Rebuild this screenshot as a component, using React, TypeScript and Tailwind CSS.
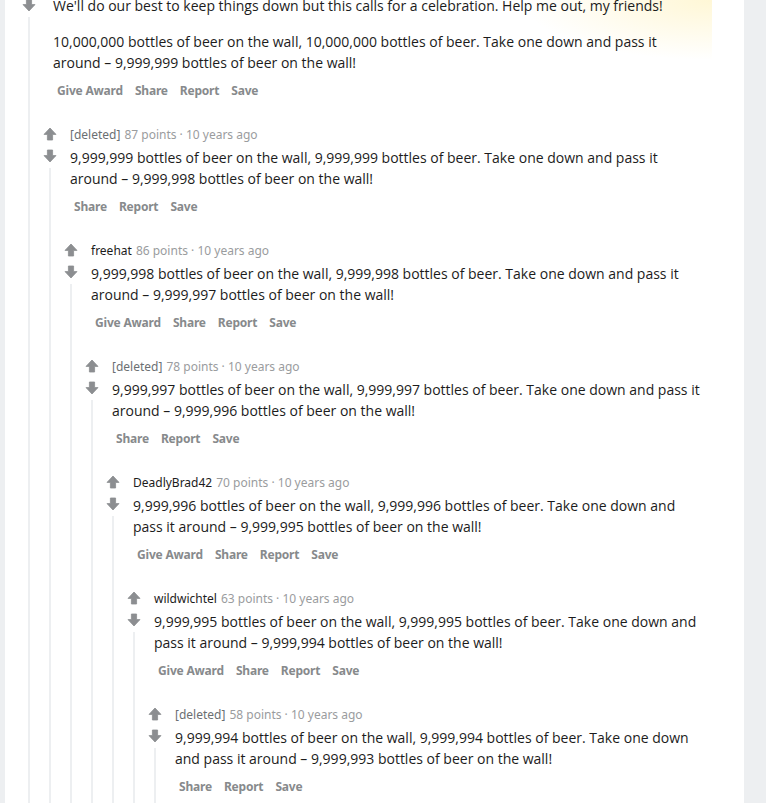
type Comment = {
  depth: number;
  author?: string;
  points?: number;
  paragraphs: string[];
  award: boolean;
};

const beer = (n: string, m: string) =>
  `${n} bottles of beer on the wall, ${n} bottles of beer. Take one down and pass it around – ${m} bottles of beer on the wall!`;

const comments: Comment[] = [
  {
    depth: 0,
    paragraphs: [
      "We'll do our best to keep things down but this calls for a celebration. Help me out, my friends!",
      beer("10,000,000", "9,999,999"),
    ],
    award: true,
  },
  { depth: 1, author: "[deleted]", points: 87, paragraphs: [beer("9,999,999", "9,999,998")], award: false },
  { depth: 2, author: "freehat", points: 86, paragraphs: [beer("9,999,998", "9,999,997")], award: true },
  { depth: 3, author: "[deleted]", points: 78, paragraphs: [beer("9,999,997", "9,999,996")], award: false },
  { depth: 4, author: "DeadlyBrad42", points: 70, paragraphs: [beer("9,999,996", "9,999,995")], award: true },
  { depth: 5, author: "wildwichtel", points: 63, paragraphs: [beer("9,999,995", "9,999,994")], award: true },
  { depth: 6, author: "[deleted]", points: 58, paragraphs: [beer("9,999,994", "9,999,993")], award: false },
];

const Arrow = ({ down }: { down?: boolean }) => (
  <svg
    width="14"
    height="14"
    viewBox="0 0 14 14"
    className={down ? "rotate-180" : ""}
  >
    <path
      d="M7 1 L13 7.4 H9.6 V13 H4.4 V7.4 H1 Z"
      fill="#8c8e91"
      stroke="#8c8e91"
      strokeWidth="0.8"
      strokeLinejoin="round"
    />
  </svg>
);

const ThreadLine = () => (
  <div className="w-[21px] shrink-0 pl-[9px] flex">
    <div className="w-[2px] bg-[#edeff1]" />
  </div>
);

const Actions = ({ award }: { award: boolean }) => (
  <div className="mt-[8px] ml-[4px] h-[20px] flex items-center gap-[12px] text-[12px] tracking-[-0.2px] font-bold text-[#878a8c]">
    {award && <span>Give Award</span>}
    <span>Share</span>
    <span>Report</span>
    <span>Save</span>
  </div>
);

const CommentRow = ({ c }: { c: Comment }) => {
  const top = c.depth === 0;
  return (
    <div className="flex">
      {Array.from({ length: c.depth }).map((_, i) => (
        <ThreadLine key={i} />
      ))}
      <div className="w-[21px] shrink-0 flex flex-col">
        {top ? (
          <div className="-mt-[3px] h-[16px] pl-[3px] flex items-center">
            <Arrow down />
          </div>
        ) : (
          <>
            <div className="h-[16px] pl-[3px] flex items-center">
              <Arrow />
            </div>
            <div className="mt-[6px] h-[16px] pl-[3px] flex items-center">
              <Arrow down />
            </div>
          </>
        )}
        <div className="mt-[4px] flex-1 pl-[9px] flex">
          <div className="w-[2px] bg-[#edeff1]" />
        </div>
      </div>
      <div
        className={
          top
            ? "flex-1 pl-[13px] -mr-[7px] pr-[7px] pb-[25px] bg-[radial-gradient(ellipse_190px_60px_at_100%_0%,#fff7d6,#ffffff00)]"
            : "flex-1 pl-[9px] pb-[25px]"
        }
      >
        {!top && (
          <div className="h-[16px] mt-[1px] flex items-center text-[12px] leading-4">
            <span
              className={
                c.author === "[deleted]" ? "text-[#6b6f72]" : "text-[#1c1c1c]"
              }
            >
              {c.author}
            </span>
            <span className="ml-[4px] text-[#9a9c9e]">
              {c.points} points · 10 years ago
            </span>
          </div>
        )}
        <div
          className={top ? "-mt-[5px]" : "mt-[4px]"}
          style={{ fontFamily: '"Open Sans", "Noto Sans", sans-serif' }}
        >
          {c.paragraphs.map((p, i) => (
            <p
              key={i}
              className={
                i > 0
                  ? "mt-[15px] text-[14px] leading-[21px] text-[#1c1c1c]"
                  : "text-[14px] leading-[21px] text-[#1c1c1c]"
              }
            >
              {p}
            </p>
          ))}
        </div>
        <Actions award={c.award} />
      </div>
    </div>
  );
};

export default function App() {
  return (
    <div
      className="w-[766px] h-[803px] overflow-hidden flex bg-[#edeff1]"
      style={{ fontFamily: '"Noto Sans", "Open Sans", sans-serif' }}
    >
      <div className="w-[5px] shrink-0 bg-[#edeff1]" />
      <div className="w-[739px] shrink-0 bg-white pl-[14px] pr-[39px] flex flex-col">
        {comments.map((c, i) => (
          <CommentRow key={i} c={c} />
        ))}
        <div className="flex flex-1">
          {Array.from({ length: 7 }).map((_, i) => (
            <ThreadLine key={i} />
          ))}
        </div>
      </div>
      <div className="flex-1 bg-[#edeff1]" />
    </div>
  );
}
